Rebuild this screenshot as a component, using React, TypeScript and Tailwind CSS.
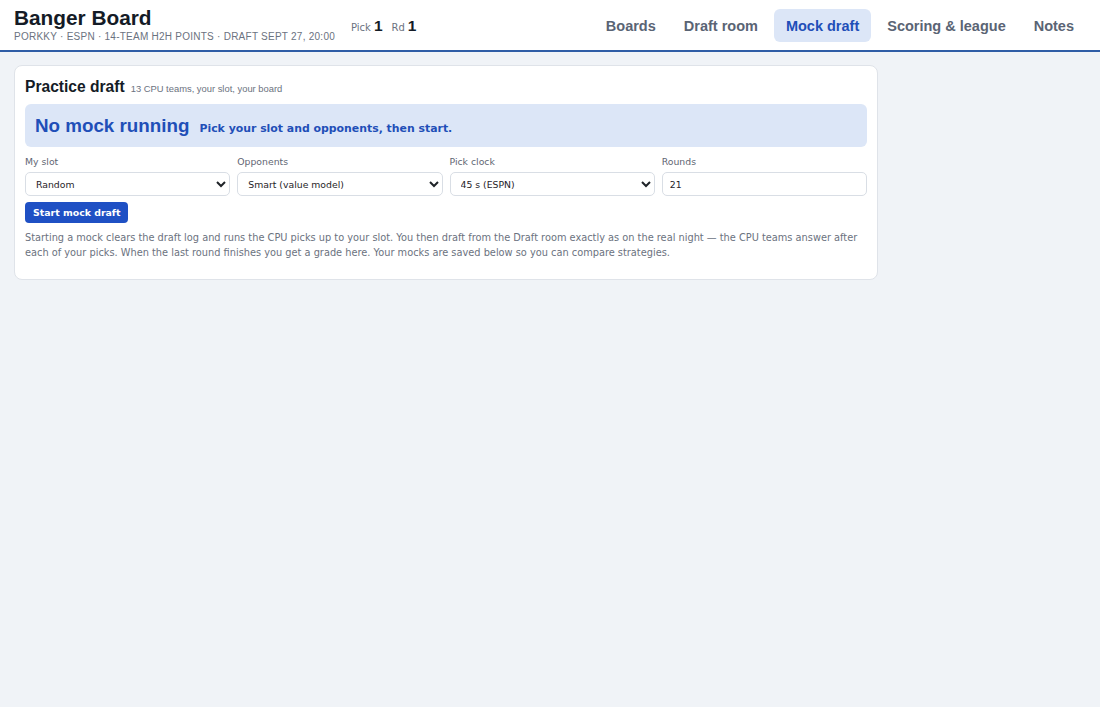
import { useState } from "react";

const TABS = ["Boards", "Draft room", "Mock draft", "Scoring & league", "Notes"];

const Field = ({ label, children }: { label: string; children: React.ReactNode }) => (
  <label className="flex flex-col gap-[4px]">
    <span className="text-[9.3px] leading-[12px] text-[#5f6673]">{label}</span>
    {children}
  </label>
);

const selectCls =
  "h-[24px] w-full rounded-[5px] border border-[#d9dee5] bg-white px-[6px] text-[9.3px] text-[#1f2328] outline-none";

export default function App() {
  const [tab, setTab] = useState("Mock draft");

  return (
    <div className="min-h-screen bg-[#f0f3f7] font-['DejaVu_Sans',sans-serif] text-[#1f2328]">
      {/* Top bar */}
      <header className="flex h-[52px] items-center justify-between border-b-2 border-[#2f5da6] bg-white px-[14px]">
        <div className="flex items-center gap-[16px]">
          <div className="flex flex-col">
            <h1 className="font-['Liberation_Sans',Arial,sans-serif] text-[20.8px] font-bold leading-[22px] text-[#141b26]">
              Banger Board
            </h1>
            <div className="mt-[2px] font-['Liberation_Sans',Arial,sans-serif] text-[10px] uppercase leading-[12px] tracking-[0.25px] text-[#6b7280]">
              Porkky · ESPN · 14-team H2H points · Draft Sept 27, 20:00
            </div>
          </div>
          <div className="flex items-baseline gap-[9px] pt-[2px]">
            <span className="flex items-baseline gap-[3px]">
              <span className="text-[10px] text-[#6b7280]">Pick</span>
              <b className="font-['Liberation_Sans',Arial,sans-serif] text-[15.5px] text-[#141b26]">1</b>
            </span>
            <span className="flex items-baseline gap-[3px]">
              <span className="text-[10px] text-[#6b7280]">Rd</span>
              <b className="font-['Liberation_Sans',Arial,sans-serif] text-[15.5px] text-[#141b26]">1</b>
            </span>
          </div>
        </div>
        <nav className="mt-[1px] flex items-center gap-[4px]">
          {TABS.map((t) => (
            <button
              key={t}
              onClick={() => setTab(t)}
              className={
                "h-[33px] rounded-[6px] px-[12px] pt-[2px] font-['Liberation_Sans',Arial,sans-serif] text-[14.5px] font-bold " +
                (t === tab ? "bg-[#dce6f7] text-[#1f4fb8]" : "text-[#5a6474]")
              }
            >
              {t}
            </button>
          ))}
        </nav>
      </header>

      <main className="p-[14px] pt-[13px]">
        <section className="max-w-[864px] rounded-[8px] border border-[#dfe3e9] bg-white px-[10px] pb-[19px] pt-[11px]">
          <div className="flex items-baseline gap-[6px] leading-[20px]">
            <h2 className="font-['Liberation_Sans',Arial,sans-serif] text-[15.6px] font-bold text-[#141b26]">
              Practice draft
            </h2>
            <span className="font-['Liberation_Sans',Arial,sans-serif] text-[9.4px] text-[#6b7280]">
              13 CPU teams, your slot, your board
            </span>
          </div>

          <div className="mt-[5px] flex items-baseline gap-[10px] rounded-[6px] bg-[#dce6f7] px-[10px] py-[10px]">
            <span className="font-['Liberation_Sans',Arial,sans-serif] text-[18.8px] font-bold leading-[23px] text-[#1f4fb8]">
              No mock running
            </span>
            <span className="text-[10.9px] font-bold text-[#1f4fb8]">
              Pick your slot and opponents, then start.
            </span>
          </div>

          <div className="mt-[9px] grid grid-cols-4 gap-[7px]">
            <Field label="My slot">
              <select className={selectCls} defaultValue="random">
                <option value="random">Random</option>
              </select>
            </Field>
            <Field label="Opponents">
              <select className={selectCls} defaultValue="smart">
                <option value="smart">Smart (value model)</option>
              </select>
            </Field>
            <Field label="Pick clock">
              <select className={selectCls} defaultValue="45">
                <option value="45">45 s (ESPN)</option>
              </select>
            </Field>
            <Field label="Rounds">
              <input
                className="h-[24px] w-full rounded-[5px] border border-[#d9dee5] bg-white px-[7px] text-[9.3px] text-[#1f2328] outline-none"
                defaultValue="21"
              />
            </Field>
          </div>

          <button className="mt-[6px] rounded-[4px] bg-[#1f50c4] px-[8px] py-[4px] text-[9.4px] font-bold leading-[13px] text-white">
            Start mock draft
          </button>

          <p className="mt-[7px] text-[9.8px] leading-[15px] text-[#6b7280]">
            Starting a mock clears the draft log and runs the CPU picks up to your slot. You then draft from the Draft
            room exactly as on the real night — the CPU teams answer after each of your picks. When the last round
            finishes you get a grade here. Your mocks are saved below so you can compare strategies.
          </p>
        </section>
      </main>
    </div>
  );
}
